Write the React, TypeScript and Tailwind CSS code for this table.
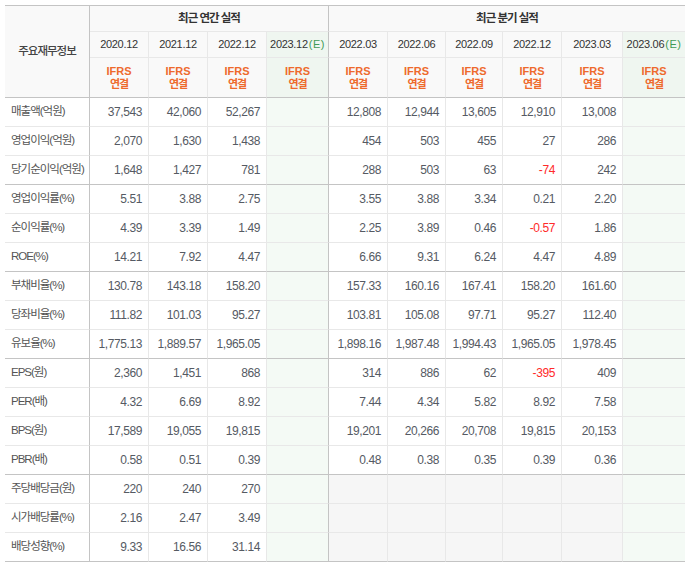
import * as React from "react";

type Row = { label: string; annual: string[]; quarter: string[] | null; groupEnd?: boolean };

const rows: Row[] = [
  { label: "매출액(억원)", annual: ["37,543", "42,060", "52,267"], quarter: ["12,808", "12,944", "13,605", "12,910", "13,008"] },
  { label: "영업이익(억원)", annual: ["2,070", "1,630", "1,438"], quarter: ["454", "503", "455", "27", "286"] },
  { label: "당기순이익(억원)", annual: ["1,648", "1,427", "781"], quarter: ["288", "503", "63", "-74", "242"], groupEnd: true },
  { label: "영업이익률(%)", annual: ["5.51", "3.88", "2.75"], quarter: ["3.55", "3.88", "3.34", "0.21", "2.20"] },
  { label: "순이익률(%)", annual: ["4.39", "3.39", "1.49"], quarter: ["2.25", "3.89", "0.46", "-0.57", "1.86"] },
  { label: "ROE(%)", annual: ["14.21", "7.92", "4.47"], quarter: ["6.66", "9.31", "6.24", "4.47", "4.89"], groupEnd: true },
  { label: "부채비율(%)", annual: ["130.78", "143.18", "158.20"], quarter: ["157.33", "160.16", "167.41", "158.20", "161.60"] },
  { label: "당좌비율(%)", annual: ["111.82", "101.03", "95.27"], quarter: ["103.81", "105.08", "97.71", "95.27", "112.40"] },
  { label: "유보율(%)", annual: ["1,775.13", "1,889.57", "1,965.05"], quarter: ["1,898.16", "1,987.48", "1,994.43", "1,965.05", "1,978.45"], groupEnd: true },
  { label: "EPS(원)", annual: ["2,360", "1,451", "868"], quarter: ["314", "886", "62", "-395", "409"] },
  { label: "PER(배)", annual: ["4.32", "6.69", "8.92"], quarter: ["7.44", "4.34", "5.82", "8.92", "7.58"] },
  { label: "BPS(원)", annual: ["17,589", "19,055", "19,815"], quarter: ["19,201", "20,266", "20,708", "19,815", "20,153"] },
  { label: "PBR(배)", annual: ["0.58", "0.51", "0.39"], quarter: ["0.48", "0.38", "0.35", "0.39", "0.36"], groupEnd: true },
  { label: "주당배당금(원)", annual: ["220", "240", "270"], quarter: null },
  { label: "시가배당률(%)", annual: ["2.16", "2.47", "3.49"], quarter: null },
  { label: "배당성향(%)", annual: ["9.33", "16.56", "31.14"], quarter: null, groupEnd: true },
];

const annualYears = ["2020.12", "2021.12", "2022.12"];
const quarterYears = ["2022.03", "2022.06", "2022.09", "2022.12", "2023.03"];

const Num: React.FC<{ v: string; bottom: string; gray?: boolean }> = ({ v, bottom, gray }) => (
  <div
    className={`flex items-center justify-end pr-[6px] border-r border-r-[#e8e8e8] text-[12px] tracking-[-0.4px] ${bottom} ${
      gray ? "bg-[#f6f6f6]" : "bg-white"
    } ${v.startsWith("-") ? "text-[#ff2a2a]" : "text-[#555a63]"}`}
  >
    {v}
  </div>
);

const Ifrs: React.FC<{ est?: boolean; dark?: boolean; last?: boolean }> = ({ est, dark, last }) => (
  <div
    className={`flex flex-col items-center justify-center text-[11px] font-bold leading-[13px] text-[#ee6a2c] border-b border-b-[#c4c4c4] ${
      est ? "bg-[#eff6f0]" : "bg-[#f9f9f9]"
    } ${last ? "" : dark ? "border-r border-r-[#c4c4c4]" : "border-r border-r-[#e8e8e8]"}`}
  >
    <span>IFRS</span>
    <span className="tracking-[-1px]">연결</span>
  </div>
);

const Year: React.FC<{ y: string; est?: boolean; dark?: boolean; last?: boolean }> = ({ y, est, dark, last }) => (
  <div
    className={`flex items-center justify-center text-[11px] tracking-[-0.3px] text-[#333] border-b border-b-[#e8e8e8] ${
      est ? "bg-[#eff6f0]" : "bg-[#f9f9f9]"
    } ${last ? "" : dark ? "border-r border-r-[#c4c4c4]" : "border-r border-r-[#e8e8e8]"}`}
  >
    {y}
    {est && <span className="text-[#3f9a55] ml-[1px] tracking-[0.5px]">(E)</span>}
  </div>
);

export default function App() {
  return (
    <div className="bg-white w-[692px] h-[567px] pt-[5px] pl-[5px]" style={{ fontFamily: '"Liberation Sans", "Noto Sans CJK KR", sans-serif' }}>
      <div className="grid w-[680px] border-t border-t-[#c4c4c4] grid-cols-[85px_59px_59px_59px_62px_59px_58px_57px_59px_61px_62px] grid-rows-[26px_26px_40px_repeat(16,29px)]">
        <div className="row-span-3 flex items-center justify-center bg-[#f9f9f9] border-r border-r-[#c4c4c4] border-b border-b-[#c4c4c4] text-[11.5px] tracking-[-1px] text-[#444] font-medium">
          주요재무정보
        </div>
        <div className="col-span-4 flex items-center justify-center bg-[#f9f9f9] border-r border-r-[#c4c4c4] border-b border-b-[#e8e8e8] text-[11.5px] font-bold tracking-[-1px] text-[#333]">
          최근 연간 실적
        </div>
        <div className="col-span-6 flex items-center justify-center bg-[#f9f9f9] border-b border-b-[#e8e8e8] text-[11.5px] font-bold tracking-[-1px] text-[#333]">
          최근 분기 실적
        </div>

        {annualYears.map((y) => (
          <Year key={y} y={y} />
        ))}
        <Year y="2023.12" est dark />
        {quarterYears.map((y) => (
          <Year key={y} y={y} />
        ))}
        <Year y="2023.06" est last />

        {annualYears.map((y) => (
          <Ifrs key={y} />
        ))}
        <Ifrs est dark />
        {quarterYears.map((y) => (
          <Ifrs key={y} />
        ))}
        <Ifrs est last />

        {rows.map((r) => {
          const bottom = r.groupEnd ? "border-b border-b-[#c4c4c4]" : "border-b border-b-[#e8e8e8]";
          return (
            <React.Fragment key={r.label}>
              <div className={`flex items-center pl-[6px] bg-white border-r border-r-[#c4c4c4] text-[11.5px] tracking-[-1px] text-[#555] ${bottom}`}>
                {r.label}
              </div>
              {r.annual.map((v, i) => (
                <Num key={i} v={v} bottom={bottom} />
              ))}
              <div className={`bg-[#f4faf5] border-r border-r-[#c4c4c4] ${bottom}`} />
              {r.quarter
                ? r.quarter.map((v, i) => <Num key={i} v={v} bottom={bottom} />)
                : [0, 1, 2, 3, 4].map((i) => <Num key={i} v="" bottom={bottom} gray />)}
              <div className={`bg-[#f4faf5] ${bottom}`} />
            </React.Fragment>
          );
        })}
      </div>
    </div>
  );
}
